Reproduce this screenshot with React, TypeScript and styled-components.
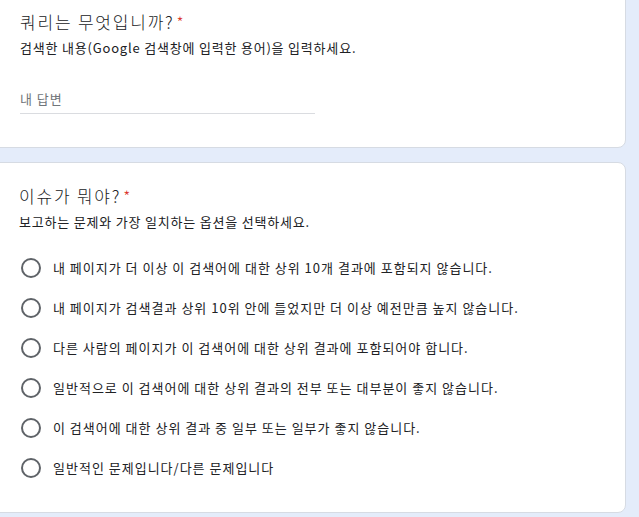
import React from "react";
import styled, { createGlobalStyle } from "styled-components";

const Global = createGlobalStyle`
  html, body { margin: 0; padding: 0; background: #e4ecfa; }
  body { font-family: "Noto Sans CJK KR", "Noto Sans", Roboto, sans-serif; color: #202124; overflow: hidden; }
`;

const Page = styled.div`
  width: 639px;
  height: 517px;
  background: #e4ecfa;
  display: flex;
  flex-direction: column;
  gap: 14px;
  padding-right: 5px;
  margin-left: -8px;
  box-sizing: border-box;
`;

const Card = styled.section<{ $first?: boolean }>`
  background: #fff;
  border: 1px solid #d6dbe3;
  border-radius: 8px;
  box-sizing: border-box;
  margin-top: ${(p) => (p.$first ? "-12px" : "0")};
  padding: ${(p) => (p.$first ? "21px 27px 33px 27px" : "21px 27px 24px 26px")};
  display: flex;
  flex-direction: column;
`;

const Title = styled.div`
  height: 24px;
  font-size: 17px;
  line-height: 24px;
  letter-spacing: 1.8px;
  font-weight: 300;
  color: #202124;
`;

const Star = styled.span`
  color: #d93025;
  margin-left: 2px;
  font-size: 16px;
  line-height: 1;
`;

const Desc = styled.div`
  font-size: 13px;
  line-height: 20px;
  letter-spacing: 0.8px;
  margin-top: 4px;
  color: #202124;
`;

const Answer = styled.div`
  margin-top: 31px;
  width: 295px;
  font-size: 13px;
  line-height: 20px;
  letter-spacing: 1px;
  color: #70757a;
  padding-bottom: 4px;
  border-bottom: 1px solid #dadce0;
`;

const Options = styled.div`
  margin-top: 16px;
  display: flex;
  flex-direction: column;
`;

const Option = styled.label`
  height: 40px;
  flex: none;
  display: flex;
  align-items: center;
  gap: 12px;
  font-size: 13px;
  line-height: 20px;
  letter-spacing: 1px;
  color: #202124;
`;

const Radio = styled.span`
  width: 16px;
  height: 16px;
  border: 2px solid #5f6368;
  border-radius: 50%;
  flex: none;
  margin-left: 2px;
`;

const options = [
  "내 페이지가 더 이상 이 검색어에 대한 상위 10개 결과에 포함되지 않습니다.",
  "내 페이지가 검색결과 상위 10위 안에 들었지만 더 이상 예전만큼 높지 않습니다.",
  "다른 사람의 페이지가 이 검색어에 대한 상위 결과에 포함되어야 합니다.",
  "일반적으로 이 검색어에 대한 상위 결과의 전부 또는 대부분이 좋지 않습니다.",
  "이 검색어에 대한 상위 결과 중 일부 또는 일부가 좋지 않습니다.",
  "일반적인 문제입니다/다른 문제입니다",
];

export default function App() {
  return (
    <>
      <Global />
      <Page>
        <Card $first>
          <Title>
            쿼리는 무엇입니까?<Star>*</Star>
          </Title>
          <Desc>검색한 내용(Google 검색창에 입력한 용어)을 입력하세요.</Desc>
          <Answer>내 답변</Answer>
        </Card>
        <Card>
          <Title>
            이슈가 뭐야?<Star>*</Star>
          </Title>
          <Desc>보고하는 문제와 가장 일치하는 옵션을 선택하세요.</Desc>
          <Options>
            {options.map((o) => (
              <Option key={o}>
                <Radio />
                {o}
              </Option>
            ))}
          </Options>
        </Card>
      </Page>
    </>
  );
}
